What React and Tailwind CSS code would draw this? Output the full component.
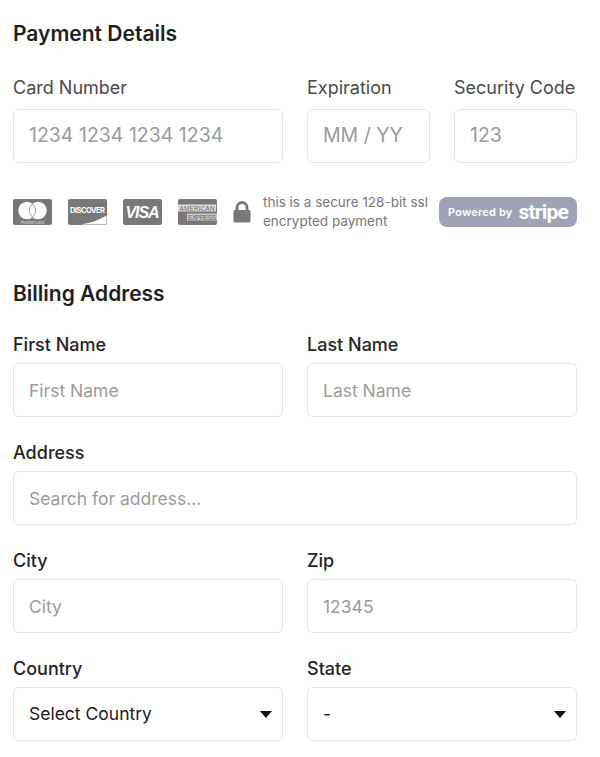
import { useState } from "react";

const inputClass =
  "w-full h-[54px] px-[15px] rounded-md border border-[#e6e6e6] bg-white text-[17.5px] text-[#1a1a1a] placeholder:text-[#9b9b9b] outline-none";

function Field({ label, placeholder, big }) {
  return (
    <div className="min-w-0">
      <label
        className={`block text-[18px] leading-[22px] whitespace-nowrap ${
          big ? "mb-[10px] text-[#4a4a4a]" : "mb-[7px] text-[#242424] font-medium"
        }`}
      >
        {label}
      </label>
      <input placeholder={placeholder} className={`${inputClass} ${big ? "text-[19.5px] pb-[2px]" : ""}`} />
    </div>
  );
}

function SelectField({ label, options }) {
  const [value, setValue] = useState(options[0]);
  return (
    <div className="min-w-0">
      <label className="block mb-[7px] text-[18px] leading-[22px] text-[#242424] font-medium">{label}</label>
      <div className="relative">
        <select
          value={value}
          onChange={(e) => setValue(e.target.value)}
          className={`${inputClass} appearance-none`}
        >
          {options.map((o) => (
            <option key={o}>{o}</option>
          ))}
        </select>
        <svg width="12" height="7" viewBox="0 0 12 7" className="absolute right-[11px] top-[24px] pointer-events-none">
          <path d="M0 0h12L6 7z" fill="#111" />
        </svg>
      </div>
    </div>
  );
}

function MasterCard() {
  return (
    <svg width="39" height="26" viewBox="0 0 39 26">
      <rect width="39" height="26" rx="2" fill="#787878" />
      <circle cx="14" cy="11.5" r="8.7" fill="#fff" />
      <circle cx="25" cy="11.5" r="8.7" fill="#fff" />
      <path d="M19.5 4.8a8.7 8.7 0 0 1 0 13.4a8.7 8.7 0 0 1 0-13.4z" fill="#fff" stroke="#8a8a8a" strokeWidth="0.8" />
      <text x="19.5" y="24.5" textAnchor="middle" fontSize="4.5" fill="#ddd" fontFamily="Inter, sans-serif">mastercard</text>
    </svg>
  );
}

function Discover() {
  return (
    <svg width="39" height="26" viewBox="0 0 39 26">
      <rect width="39" height="26" rx="2" fill="#787878" />
      <path d="M38.5 16.5V24a1.5 1.5 0 0 1-1.5 1.5H13c10-1.5 18-4.5 25.5-9z" fill="#fff" />
      <text x="19.5" y="14" textAnchor="middle" fontSize="7.5" fontWeight="700" fill="#fff" fontFamily="Inter, sans-serif" textLength="35">DISCOVER</text>
    </svg>
  );
}

function Visa() {
  return (
    <svg width="39" height="26" viewBox="0 0 39 26">
      <rect width="39" height="26" rx="2" fill="#787878" />
      <text x="19.5" y="19" textAnchor="middle" fontSize="16" fontWeight="800" fontStyle="italic" fill="#fff" fontFamily="Liberation Sans, sans-serif" textLength="34">VISA</text>
    </svg>
  );
}

function Amex() {
  return (
    <svg width="39" height="26" viewBox="0 0 39 26">
      <rect width="39" height="26" rx="2" fill="#787878" />
      <rect x="0" y="5.5" width="38" height="7" fill="#dcdcdc" />
      <rect x="9" y="14.5" width="30" height="7" fill="#c8c8c8" />
      <text x="19" y="11.5" textAnchor="middle" fontSize="6.5" fill="#666" fontFamily="Liberation Sans, sans-serif" textLength="35">AMERICAN</text>
      <text x="24" y="20.5" textAnchor="middle" fontSize="6.5" fill="#666" fontFamily="Liberation Sans, sans-serif" textLength="28">EXPRESS</text>
    </svg>
  );
}

function Lock() {
  return (
    <svg width="18" height="22" viewBox="0 0 18 22">
      <path d="M4 10V6.5a5 5 0 0 1 10 0V10" fill="none" stroke="#787878" strokeWidth="2.8" />
      <rect x="0.5" y="9" width="17" height="12.5" rx="1.5" fill="#787878" />
    </svg>
  );
}

export default function App() {
  return (
    <div className="w-[600px] h-[757px] bg-white pl-[13px] pr-[23px] pt-[20px] overflow-hidden font-['Inter',sans-serif]">
      <h2 className="text-[21px] leading-[28px] font-semibold text-[#1f1f1f] mb-[29px]">Payment Details</h2>

      <div className="grid grid-cols-[270px_123px_123px] gap-x-6">
        <Field label="Card Number" placeholder="1234 1234 1234 1234" big />
        <Field label="Expiration" placeholder="MM / YY" big />
        <Field label="Security Code" placeholder="123" big />
      </div>

      {/* card logos and stripe badge */}
      <div className="flex items-center h-[30px] mt-[34px]">
        <MasterCard />
        <div className="ml-[16px]"><Discover /></div>
        <div className="ml-[16px]"><Visa /></div>
        <div className="ml-[16px]"><Amex /></div>
        <div className="ml-[16px]"><Lock /></div>
        <p className="ml-[12px] w-[176px] text-[13.5px] leading-[19px] text-[#777] whitespace-nowrap">
          this is a secure 128-bit ssl
          <br />
          encrypted payment
        </p>
        <div className="ml-auto h-[30px] w-[138px] rounded-lg bg-[#a0a2b6] flex items-center pl-[9px] text-white">
          <span className="text-[11px] font-semibold tracking-[0.2px]">Powered by</span>
          <span className="ml-[6px] text-[21px] leading-none font-bold tracking-[-0.8px] font-['Roboto',sans-serif]">stripe</span>
        </div>
      </div>

      <h2 className="mt-[53px] mb-[26px] text-[21px] leading-[28px] font-semibold text-[#1f1f1f]">Billing Address</h2>

      <div className="grid grid-cols-2 gap-x-6 gap-y-[25px]">
        <Field label="First Name" placeholder="First Name" />
        <Field label="Last Name" placeholder="Last Name" />
        <div className="col-span-2">
          <Field label="Address" placeholder="Search for address..." />
        </div>
        <Field label="City" placeholder="City" />
        <Field label="Zip" placeholder="12345" />
        <SelectField label="Country" options={["Select Country"]} />
        <SelectField label="State" options={["-"]} />
      </div>
    </div>
  );
}
